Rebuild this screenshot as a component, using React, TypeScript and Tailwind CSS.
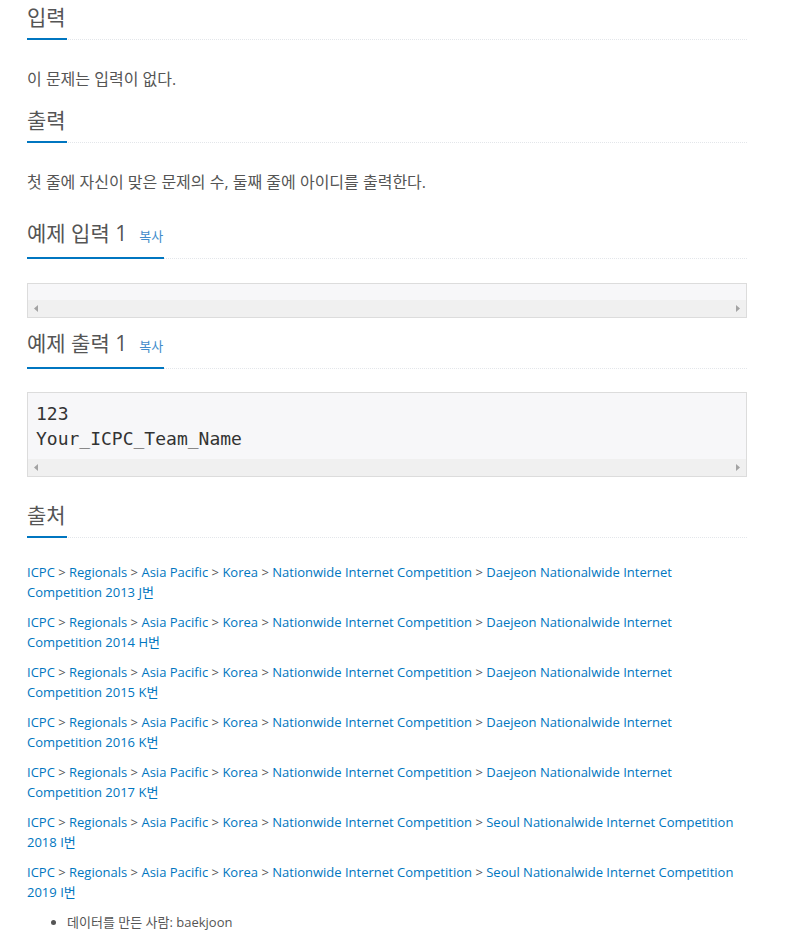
import { PropsWithChildren } from 'react'
import clsx from 'clsx'

const FONT = "font-['Open_Sans','Noto_Sans_CJK_KR',sans-serif]"

const SOURCES = [
  { tail: 'Daejeon Nationalwide Internet Competition 2013', no: 'J' },
  { tail: 'Daejeon Nationalwide Internet Competition 2014', no: 'H' },
  { tail: 'Daejeon Nationalwide Internet Competition 2015', no: 'K' },
  { tail: 'Daejeon Nationalwide Internet Competition 2016', no: 'K' },
  { tail: 'Daejeon Nationalwide Internet Competition 2017', no: 'K' },
  { tail: 'Seoul Nationalwide Internet Competition 2018', no: 'I' },
  { tail: 'Seoul Nationalwide Internet Competition 2019', no: 'I' },
]

const PATH = ['ICPC', 'Regionals', 'Asia Pacific', 'Korea', 'Nationwide Internet Competition']

export default function App() {
  return (
    <div className={clsx(FONT, 'w-[720px] ml-[27px] text-[#555] bg-white')}>
      <Headline>입력</Headline>
      <p className="mt-[29px] text-[16px] leading-[20px]">이 문제는 입력이 없다.</p>

      <Headline className="mt-[14px]">출력</Headline>
      <p className="mt-[29px] text-[16px] leading-[20px]">
        첫 줄에 자신이 맞은 문제의 수, 둘째 줄에 아이디를 출력한다.
      </p>

      <Headline className="mt-[24px]" copy>
        예제 입력 1
      </Headline>
      <Sample className="mt-[24px]" lines={[]} />

      <Headline className="mt-[8px]" copy>
        예제 출력 1
      </Headline>
      <Sample className="mt-[23px]" lines={['123', 'Your_ICPC_Team_Name']} />

      <Headline className="mt-[21px]">출처</Headline>
      <div className="mt-[24px] text-[13px] leading-[20px]">
        {SOURCES.map((s, idx) => (
          <p key={idx} className={clsx(idx > 0 && 'mt-[10px]')}>
            {PATH.map((p) => (
              <span key={p}>
                <a className="text-[#0076c0]">{p}</a> {'>'}{' '}
              </span>
            ))}
            <a className="text-[#0076c0]">{s.tail}</a>{' '}
            <a className="text-[#0076c0]">{s.no}번</a>
          </p>
        ))}
        <ul className="mt-[10px] pl-[40px] list-disc">
          <li>데이터를 만든 사람: baekjoon</li>
        </ul>
      </div>
    </div>
  )
}

interface HeadlineProps {
  className?: string
  copy?: boolean
}

function Headline({ children, className, copy }: PropsWithChildren<HeadlineProps>) {
  return (
    <div className={clsx('border-b border-dotted border-[#e3e6ea]', className)}>
      <h2 className="inline-block -mb-px pt-[2px] pb-[6px] pr-[1px] border-b-2 border-[#0076c0] text-[21px] leading-[30px] font-normal">
        {children}
        {copy && <span className="ml-[12px] text-[13px] text-[#428bca]">복사</span>}
      </h2>
    </div>
  )
}

function Sample({ lines, className }: { lines: string[]; className?: string }) {
  return (
    <div className={clsx('border border-[#dcdcdc] bg-[#f7f7f9]', className)}>
      <pre className="px-[8px] py-[8px] font-['DejaVu_Sans_Mono',monospace] text-[18px] leading-[25px] text-[#333]">
        {lines.join('\n')}
      </pre>
      <div className="flex h-[17px] items-center justify-between bg-[#f0f0f0] px-[6px]">
        <svg width="4" height="7" viewBox="0 0 4 7">
          <path d="M4 0 L0 3.5 L4 7 Z" fill="#a3a3a3" />
        </svg>
        <svg width="4" height="7" viewBox="0 0 4 7">
          <path d="M0 0 L4 3.5 L0 7 Z" fill="#a3a3a3" />
        </svg>
      </div>
    </div>
  )
}
